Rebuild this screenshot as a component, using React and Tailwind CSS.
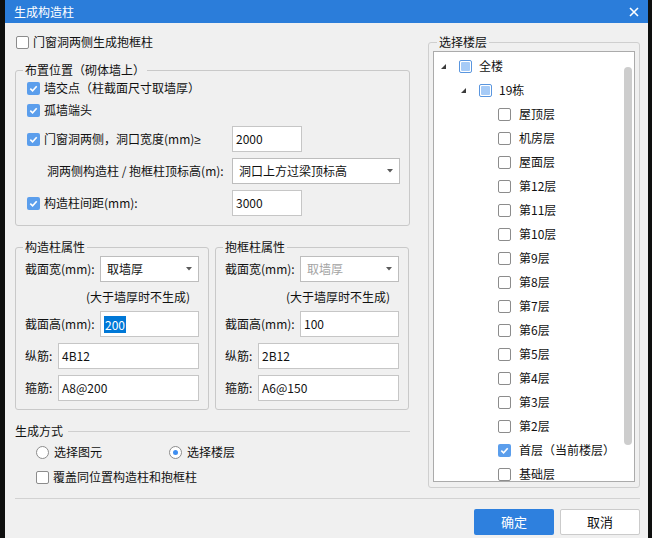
import React from 'react';

const FONT = "font-['Noto_Sans_CJK_SC','Noto_Sans',sans-serif]";

function Box({ state = 'off' }) {
  if (state === 'on') {
    return (
      <span className="flex h-[13px] w-[13px] shrink-0 items-center justify-center rounded-[2px] bg-[#5b9eec]">
        <svg width="9" height="9" viewBox="0 0 9 9">
          <path d="M1.3 4.6 L3.6 6.8 L7.7 2.2" fill="none" stroke="#fff" strokeWidth="1.6" />
        </svg>
      </span>
    );
  }
  if (state === 'part') {
    return (
      <span className="flex h-[13px] w-[13px] shrink-0 rounded-[2px] border border-[#5a96df] bg-white p-px">
        <span className="flex-1 rounded-[1px] bg-[#a6cbf7]" />
      </span>
    );
  }
  return <span className="h-[13px] w-[13px] shrink-0 rounded-[2px] border border-[#8c8c8c] bg-white" />;
}

function Radio({ on }) {
  return (
    <span className="flex h-[13px] w-[13px] shrink-0 items-center justify-center rounded-full border border-[#8c8c8c] bg-white">
      {on && <span className="h-[5px] w-[5px] rounded-full bg-[#3f8ef0]" />}
    </span>
  );
}

function Field({ value, w, children }) {
  return (
    <div className={`flex h-[26px] items-center border border-[#c6c6c6] bg-white pl-[3px] ${w}`}>
      {children || value}
    </div>
  );
}

function Select({ value, w, disabled }) {
  return (
    <div className={`flex h-[26px] items-center justify-between border border-[#bdbdbd] bg-white pl-[6px] pr-[6px] ${w}`}>
      <span className={disabled ? 'text-[#a3a3a3]' : ''}>{value}</span>
      <svg width="6" height="4" viewBox="0 0 6 4">
        <path d="M0 0 H6 L3 3.5 Z" fill="#5a5a5a" />
      </svg>
    </div>
  );
}

function Expander() {
  return (
    <svg width="5" height="5" viewBox="0 0 5 5" className="shrink-0">
      <path d="M5 0 V5 H0 Z" fill="#3c3c3c" />
    </svg>
  );
}

function PropsGroup({ title, width, height, bars, stirrup, disabled, highlight }) {
  return (
    <fieldset className="w-[194px] rounded-[3px] border border-[#c9c9c9]">
      <legend className="ml-[7px] px-[2px] leading-4">{title}</legend>
      <div className="pl-[9px] pr-[9px] pb-[8px]">
        <div className="mt-px flex items-center">
          <span className="w-[75px]">截面宽(mm):</span>
          <Select value={width} w="w-[99px]" disabled={disabled} />
        </div>
        <div className="flex h-[29px] items-center pl-[61px]">(大于墙厚时不生成)</div>
        <div className="flex items-center">
          <span className="w-[75px]">截面高(mm):</span>
          <Field w="w-[99px]">
            {highlight ? (
              <span className="bg-[#0078d7] pl-px pr-px leading-[17px] text-white">{height}</span>
            ) : (
              height
            )}
          </Field>
        </div>
        <div className="mt-[6px] flex items-center">
          <span className="w-[33px]">纵筋:</span>
          <Field value={bars} w="w-[141px]" />
        </div>
        <div className="mt-[6px] flex items-center">
          <span className="w-[33px]">箍筋:</span>
          <Field value={stirrup} w="w-[141px]" />
        </div>
      </div>
    </fieldset>
  );
}

const floors = ['屋顶层', '机房层', '屋面层', '第12层', '第11层', '第10层', '第9层', '第8层', '第7层', '第6层', '第5层', '第4层', '第3层', '第2层'];

export default function App() {
  return (
    <div className={`flex h-[538px] w-[652px] overflow-hidden bg-[#0e0f0e] text-[12px] text-[#111] ${FONT}`}>
      <div className="w-[5px] shrink-0" />
      <div className="flex w-[643px] shrink-0 flex-col bg-[#f0f0f0]">
        {/* title bar */}
        <div className="flex h-[23px] items-center justify-between bg-[#2b7dda] pl-[9px] pr-[9px] text-white">
          <span>生成构造柱</span>
          <svg width="10" height="10" viewBox="0 0 10 10">
            <path d="M1 1 L9 9 M9 1 L1 9" stroke="#fff" strokeWidth="1.6" />
          </svg>
        </div>

        <div className="flex flex-col pl-[10px] pr-[8px]">
          <div className="flex">
            {/* left column */}
            <div className="flex w-[395px] flex-col">
              <div className="mt-[9px] flex h-[20px] items-center gap-[4px] pl-px">
                <Box />
                <span>门窗洞两侧生成抱框柱</span>
              </div>

              <fieldset className="mt-[10px] rounded-[3px] border border-[#c9c9c9]">
                <legend className="ml-[7px] px-[2px] leading-4">布置位置（砌体墙上）</legend>
                <div className="pl-[11px] pr-[9px] pb-[9px]">
                  <div className="flex h-[20px] items-center gap-[4px]">
                    <Box state="on" />
                    <span>墙交点（柱截面尺寸取墙厚）</span>
                  </div>
                  <div className="mt-[2px] flex h-[20px] items-center gap-[4px]">
                    <Box state="on" />
                    <span>孤墙端头</span>
                  </div>
                  <div className="mt-[6px] flex items-center">
                    <div className="flex w-[205px] items-center gap-[4px]">
                      <Box state="on" />
                      <span>
                        门窗洞两侧，洞口宽度(mm)<span className="font-['Liberation_Sans',sans-serif]">≥</span>
                      </span>
                    </div>
                    <Field value="2000" w="w-[70px]" />
                  </div>
                  <div className="mt-[6px] flex items-center">
                    <span className="w-[205px] pl-[20px]">洞两侧构造柱 / 抱框柱顶标高(m):</span>
                    <Select value="洞口上方过梁顶标高" w="w-[168px]" />
                  </div>
                  <div className="mt-[6px] flex items-center">
                    <div className="flex w-[205px] items-center gap-[4px]">
                      <Box state="on" />
                      <span>构造柱间距(mm):</span>
                    </div>
                    <Field value="3000" w="w-[70px]" />
                  </div>
                </div>
              </fieldset>

              <div className="mt-[13px] flex gap-[6px]">
                <PropsGroup title="构造柱属性" width="取墙厚" height="200" bars="4B12" stirrup="A8@200" highlight />
                <PropsGroup title="抱框柱属性" width="取墙厚" height="100" bars="2B12" stirrup="A6@150" disabled />
              </div>

              <div className="mt-[12px] flex h-[18px] items-center gap-[5px]">
                <span>生成方式</span>
                <div className="h-px flex-1 bg-[#cfcfcf]" />
              </div>
              <div className="mt-[2px] flex h-[20px] items-center pl-[21px]">
                <div className="flex w-[133px] items-center gap-[5px]">
                  <Radio />
                  <span>选择图元</span>
                </div>
                <div className="flex items-center gap-[5px]">
                  <Radio on />
                  <span>选择楼层</span>
                </div>
              </div>
              <div className="mt-[5px] flex h-[20px] items-center gap-[4px] pl-[21px]">
                <Box />
                <span>覆盖同位置构造柱和抱框柱</span>
              </div>
            </div>

            {/* right column */}
            <fieldset className="ml-[18px] mt-[11px] w-[212px] self-start rounded-[3px] border border-[#cfcfcf] px-[4px] pb-[5px]">
              <legend className="ml-[4px] px-[2px] leading-4">选择楼层</legend>
              <div className="mt-px flex h-[431px] overflow-hidden border border-[#ababab] bg-white">
                <div className="flex-1 pt-[2px]">
                  <div className="flex h-[24px] items-center pl-[7px]">
                    <Expander />
                    <span className="ml-[13px]"><Box state="part" /></span>
                    <span className="ml-[7px]">全楼</span>
                  </div>
                  <div className="flex h-[24px] items-center pl-[27px]">
                    <Expander />
                    <span className="ml-[13px]"><Box state="part" /></span>
                    <span className="ml-[7px]">19栋</span>
                  </div>
                  {floors.map((f) => (
                    <div key={f} className="flex h-[24px] items-center gap-[8px] pl-[64px]">
                      <Box />
                      <span>{f}</span>
                    </div>
                  ))}
                  <div className="flex h-[24px] items-center gap-[8px] pl-[64px]">
                    <Box state="on" />
                    <span>首层（当前楼层）</span>
                  </div>
                  <div className="flex h-[24px] items-center gap-[8px] pl-[64px]">
                    <Box />
                    <span>基础层</span>
                  </div>
                </div>
                <div className="mr-[2px] w-[8px]">
                  <div className="mt-[15px] h-[378px] rounded-full bg-[#cdcdcd]" />
                </div>
              </div>
            </fieldset>
          </div>

          <div className="mt-[10px] h-px bg-[#d2d2d2]" />

          <div className="mt-[10px] flex justify-end gap-[6px]">
            <button className="flex h-[26px] w-[80px] items-center justify-center rounded-[2px] bg-[#2e80de] text-[13px] text-white">
              确定
            </button>
            <button className="flex h-[26px] w-[80px] items-center justify-center rounded-[2px] border border-[#cbcbcb] bg-white text-[13px] text-[#111]">
              取消
            </button>
          </div>
        </div>
      </div>
      <div className="w-[4px] shrink-0" />
    </div>
  );
}
